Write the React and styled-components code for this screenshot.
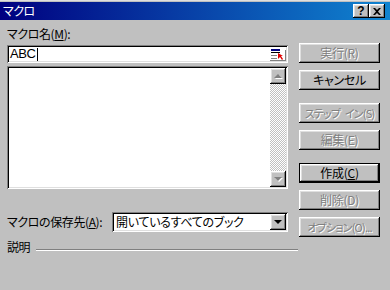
import React from "react";
import styled, { createGlobalStyle, css } from "styled-components";

const GlobalStyle = createGlobalStyle`
  html, body {
    margin: 0;
    padding: 0;
    background: #c0c0c0;
  }
  body {
    font-family: "Noto Sans CJK JP", sans-serif;
    font-size: 12px;
    font-feature-settings: "palt";
  }
`;

const raised = css`
  box-shadow: inset -1px -1px #000, inset 1px 1px #fff,
    inset -2px -2px #808080, inset 2px 2px #dfdfdf;
`;

const sunken = css`
  box-shadow: inset 1px 1px #808080, inset -1px -1px #fff,
    inset 2px 2px #000, inset -2px -2px #dfdfdf;
`;

const buttons = [
  { label: "実行", key: "R", disabled: true },
  { label: "キャンセル", key: null },
  { label: "ステップ\u2002イン", key: "S", disabled: true, gap: 13, tight: true },
  { label: "編集", key: "E", disabled: true },
  { label: "作成", key: "C", isDefault: true, underline: true, gap: 13 },
  { label: "削除", key: "D", disabled: true },
  { label: "オプション", key: "O", disabled: true, suffix: "...", tight: true },
];

const Arrow = ({ dir, disabled }) => {
  const pts = dir === "up" ? "4,0 0,4 8,4" : "0,0 8,0 4,4";
  return (
    <svg width="9" height="5" viewBox="0 0 9 5">
      {disabled && (
        <polygon points={pts} fill="#fff" transform="translate(1,1)" />
      )}
      <polygon points={pts} fill={disabled ? "#808080" : "#000"} />
    </svg>
  );
};

const PickerIcon = () => (
  <svg width="16" height="14" viewBox="0 0 16 14">
    <rect x="0" y="0" width="16" height="14" fill="#fff" />
    <rect x="0" y="13" width="16" height="1" fill="#808080" />
    <rect x="1" y="2" width="9" height="2" fill="#000080" />
    <rect x="1" y="5" width="9" height="1" fill="#000" />
    <rect x="1" y="8" width="6" height="1" fill="#808080" />
    <rect x="1" y="11" width="6" height="1" fill="#808080" />
    <rect x="15" y="3" width="1" height="10" fill="#808080" />
    <polygon points="8,6 8,12 10,10 12,13 13,12 11,9 13,9" fill="#e00000" />
  </svg>
);

const MacroDialog = () => {
  return (
    <Window>
      <TitleBar>
        <TitleText>マクロ</TitleText>
        <TitleButtons>
          <TitleButton>
            <HelpGlyph>?</HelpGlyph>
          </TitleButton>
          <TitleButton>
            <svg width="8" height="7" viewBox="0 0 8 7">
              <path
                d="M0 0h2l2 2 2-2h2L5 3.5 8 7H6L4 5 2 7H0l3-3.5z"
                fill="#000"
              />
            </svg>
          </TitleButton>
        </TitleButtons>
      </TitleBar>

      <Body>
        <LeftCol>
          <Label>
            マクロ名(<Mnemonic>M</Mnemonic>):
          </Label>
          <NameField>
            <NameText>ABC</NameText>
            <Caret />
            <PickerSlot>
              <PickerIcon />
            </PickerSlot>
          </NameField>
          <ListBox>
            <ScrollBar>
              <ScrollButton>
                <Arrow dir="up" disabled />
              </ScrollButton>
              <ScrollTrack />
              <ScrollButton>
                <Arrow dir="down" disabled />
              </ScrollButton>
            </ScrollBar>
          </ListBox>
          <StoreRow>
            <Label>
              マクロの保存先(<Mnemonic>A</Mnemonic>):
            </Label>
            <Combo>
              <ComboText>開いているすべてのブック</ComboText>
              <ComboButton>
                <Arrow dir="down" />
              </ComboButton>
            </Combo>
          </StoreRow>
          <DescRow>
            <Label>説明</Label>
            <Etched />
          </DescRow>
        </LeftCol>

        <RightCol>
          {buttons.map((b, i) => (
            <ActionButton
              key={i}
              $disabled={b.disabled}
              $default={b.isDefault}
              $gap={b.gap}
              $tight={b.tight}
            >
              {b.label}
              {b.key && (
                <>
                  (
                  {b.underline ? <Mnemonic>{b.key}</Mnemonic> : b.key})
                </>
              )}
              {b.suffix}
            </ActionButton>
          ))}
        </RightCol>
      </Body>
    </Window>
  );
};

const Window = styled.div`
  width: 390px;
  height: 290px;
  background: #c0c0c0;
  padding-top: 2px;
  box-sizing: border-box;
  box-shadow: inset 0 1px #dfdfdf;
  overflow: hidden;
`;

const TitleBar = styled.div`
  height: 18px;
  display: flex;
  align-items: center;
  justify-content: space-between;
  background: linear-gradient(to right, #000080, #1084d0);
  padding: 0 2px 0 3px;
`;

const TitleText = styled.div`
  color: #fff;
  font-size: 12px;
  line-height: 16px;
  letter-spacing: -0.5px;
`;

const TitleButtons = styled.div`
  display: flex;
  align-items: center;
  margin-right: 3px;
`;

const TitleButton = styled.div`
  width: 16px;
  height: 14px;
  background: #c0c0c0;
  ${raised};
  display: flex;
  align-items: center;
  justify-content: center;
`;

const HelpGlyph = styled.span`
  font-family: "Liberation Sans", sans-serif;
  font-weight: bold;
  font-size: 12px;
  line-height: 12px;
`;

const Body = styled.div`
  display: flex;
  padding: 6px 0 0 7px;
`;

const LeftCol = styled.div`
  width: 291px;
  display: flex;
  flex-direction: column;
`;

const Label = styled.div`
  font-size: 12px;
  line-height: 16px;
  letter-spacing: -0.4px;
  color: #000;
  white-space: nowrap;
`;

const Mnemonic = styled.span`
  text-decoration: underline;
  text-underline-offset: 1px;
`;

const NameField = styled.div`
  width: 281px;
  height: 18px;
  margin-top: 3px;
  box-sizing: border-box;
  background: #fff;
  ${sunken};
  display: flex;
  align-items: center;
  padding: 0 2px 0 3px;
`;

const NameText = styled.span`
  font-family: "Liberation Sans", sans-serif;
  font-size: 13px;
  letter-spacing: -0.4px;
  line-height: 14px;
`;

const Caret = styled.span`
  width: 1px;
  height: 13px;
  background: #000;
  margin-left: 1px;
`;

const PickerSlot = styled.div`
  margin-left: auto;
  display: flex;
`;

const ListBox = styled.div`
  width: 281px;
  height: 123px;
  margin-top: 3px;
  box-sizing: border-box;
  background: #fff;
  ${sunken};
  padding: 2px;
  display: flex;
  justify-content: flex-end;
`;

const ScrollBar = styled.div`
  width: 16px;
  display: flex;
  flex-direction: column;
`;

const ScrollButton = styled.div`
  width: 16px;
  height: 16px;
  background: #c0c0c0;
  ${raised};
  display: flex;
  align-items: center;
  justify-content: center;
`;

const ScrollTrack = styled.div`
  flex: 1;
  background-color: #fff;
  background-image: conic-gradient(
    #c0c0c0 25%,
    transparent 0 50%,
    #c0c0c0 0 75%,
    transparent 0
  );
  background-size: 2px 2px;
`;

const StoreRow = styled.div`
  width: 281px;
  margin-top: 23px;
  display: flex;
  align-items: center;
  justify-content: space-between;
`;

const Combo = styled.div`
  width: 176px;
  height: 20px;
  box-sizing: border-box;
  background: #fff;
  ${sunken};
  display: flex;
  align-items: center;
  padding: 2px;
`;

const ComboText = styled.span`
  font-size: 12px;
  line-height: 16px;
  letter-spacing: -0.3px;
  padding-left: 2px;
`;

const ComboButton = styled.div`
  margin-left: auto;
  width: 16px;
  height: 16px;
  background: #c0c0c0;
  ${raised};
  display: flex;
  align-items: center;
  justify-content: center;
`;

const DescRow = styled.div`
  margin-top: 7px;
  display: flex;
  align-items: center;
  gap: 6px;
`;

const Etched = styled.div`
  flex: 1;
  height: 0;
  margin-top: 5px;
  border-top: 1px solid #808080;
  border-bottom: 1px solid #fff;
`;

const RightCol = styled.div`
  width: 81px;
  margin-left: 1px;
  padding-top: 17px;
  display: flex;
  flex-direction: column;
  gap: 7px;
`;

const ActionButton = styled.div`
  height: 20px;
  box-sizing: border-box;
  background: #c0c0c0;
  ${raised};
  ${(p) =>
    p.$default &&
    css`
      box-shadow: inset 0 0 0 1px #000, inset -2px -2px #000,
        inset 2px 2px #fff, inset -3px -3px #808080, inset 3px 3px #dfdfdf;
    `};
  ${(p) => p.$gap && `margin-top: ${p.$gap - 7}px;`}
  display: flex;
  align-items: center;
  justify-content: center;
  font-size: ${(p) => (p.$tight ? "11px" : "12px")};
  letter-spacing: ${(p) => (p.$tight ? "-0.8px" : "-0.3px")};
  line-height: 16px;
  white-space: nowrap;
  color: ${(p) => (p.$disabled ? "#808080" : "#000")};
  text-shadow: ${(p) => (p.$disabled ? "1px 1px 0 #fff" : "none")};
`;

const App = () => (
  <>
    <GlobalStyle />
    <MacroDialog />
  </>
);

export default App;
